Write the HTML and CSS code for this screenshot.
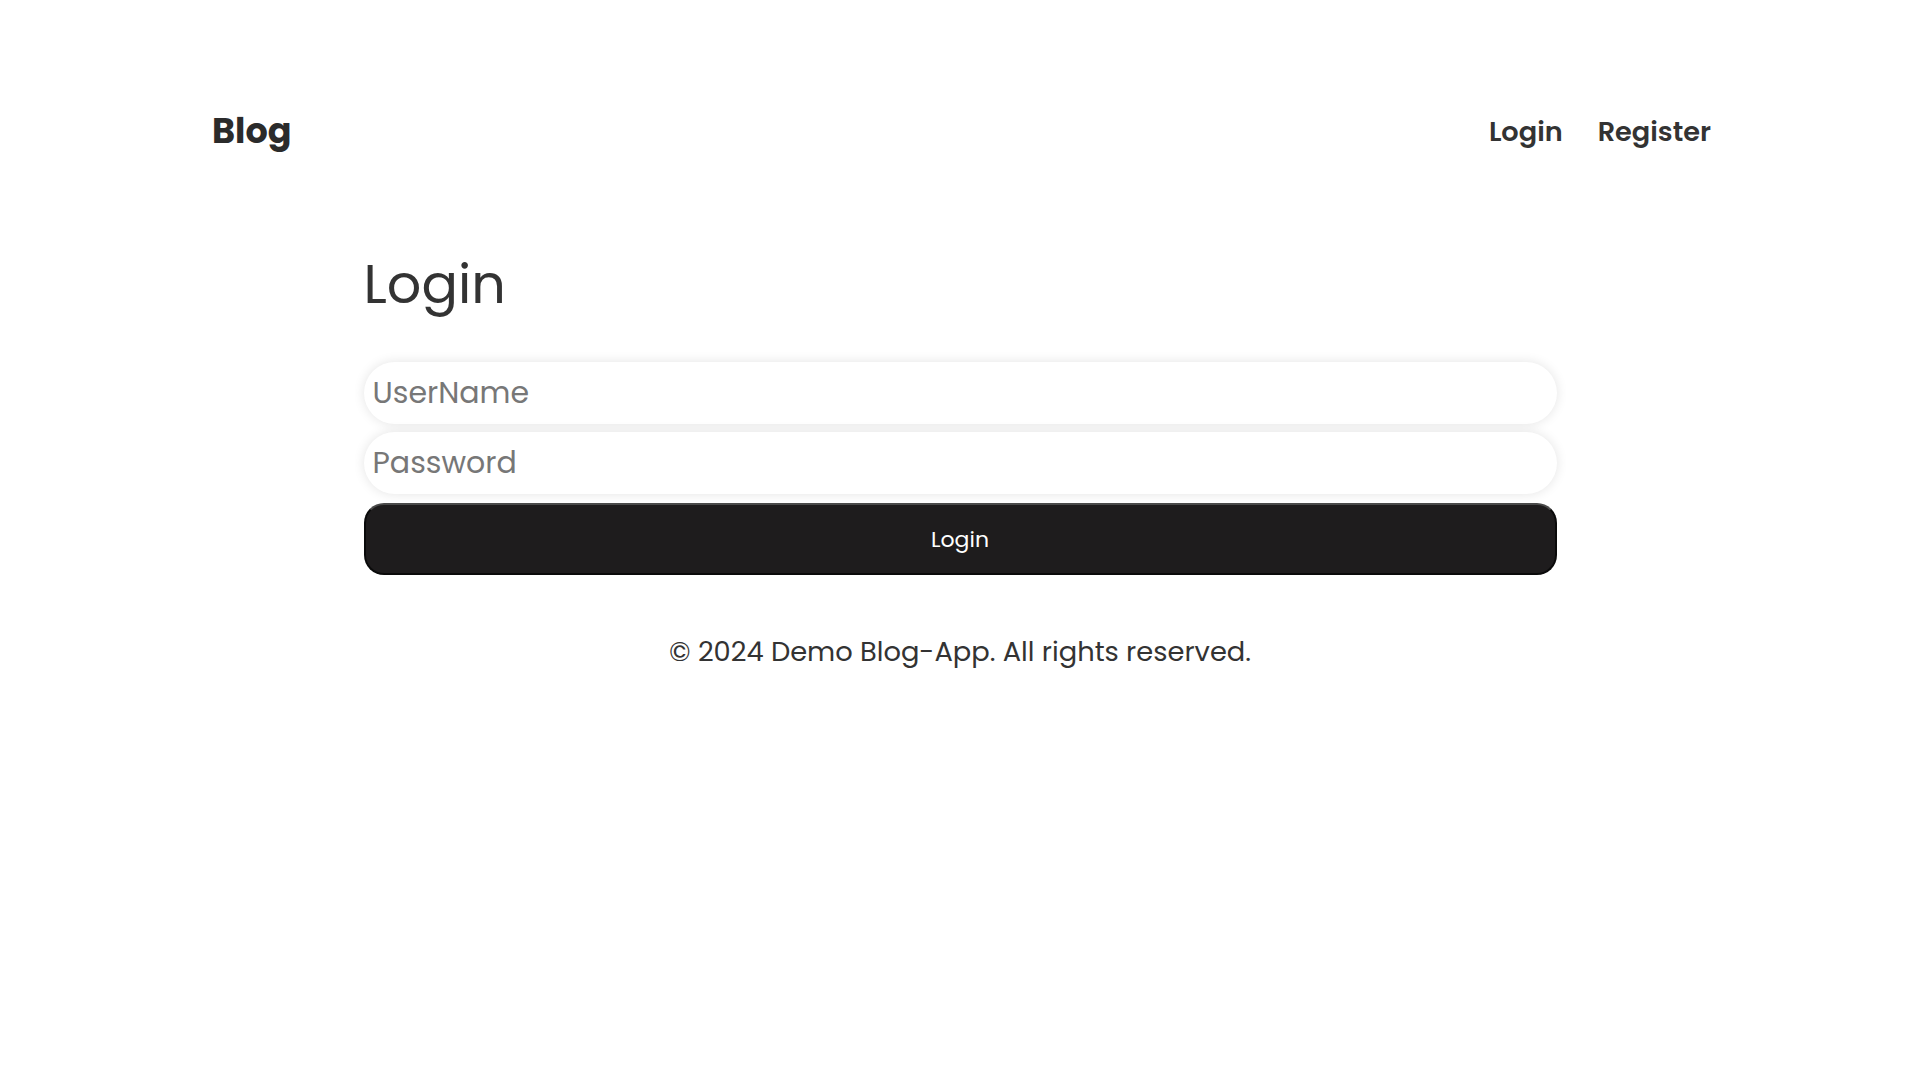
FILE: index.html
```html
<!DOCTYPE html>
<html lang="en">
<head>
    <meta charset="UTF-8">
    <meta name="viewport" content="width=device-width, initial-scale=1.0">
    <title>Blog - Login</title>
    <link rel="stylesheet" href="styles.css">
</head>
<body>
    <header class="header">
        <a href="#" class="logo">Blog</a>
        <nav class="nav">
            <a href="#">Login</a>
            <a href="#">Register</a>
        </nav>
    </header>
    <main class="main">
        <form class="login">
            <h1>Login</h1>
            <input type="text" placeholder="UserName">
            <input type="password" placeholder="Password">
            <button type="button">Login</button>
        </form>
        <footer class="footer">
            <p>&copy; 2024 Demo Blog-App. All rights reserved.</p>
        </footer>
    </main>
</body>
</html>
```

FILE: styles.css
```css
body {
    margin: 0;
    font-family: "Poppins", "Inter", sans-serif;
    color: #333;
    background-color: #fff;
}
a {
    text-decoration: none;
    color: inherit;
}
.header {
    display: flex;
    justify-content: space-between;
    align-items: center;
    height: 80px;
    margin-top: 90px;
    padding: 0 209px 0 212px;
}
.logo {
    font-size: 35px;
    font-weight: 700;
    color: #2b2b2b;
}
.nav {
    display: flex;
    gap: 35px;
    padding-top: 3px;
}
.nav a {
    font-size: 27.2px;
    font-weight: 600;
    color: #333;
}
.main {
    width: 1193px;
    margin: 0 auto;
}
.login {
    display: flex;
    flex-direction: column;
    gap: 8px;
}
.login h1 {
    font-size: 54px;
    font-weight: 400;
    margin: 74px 0 29px;
    color: #333;
}
.login input {
    height: 62px;
    padding: 0 9px;
    border: none;
    border-radius: 31px;
    box-shadow: 0 0 12px rgba(0, 0, 0, 0.11);
    font-family: inherit;
    font-size: 30px;
    color: #333;
    outline: none;
}
.login input::placeholder {
    color: #777;
}
.login button {
    height: 72px;
    margin-top: 1px;
    border: 2px solid #0a0a0a;
    border-top-color: #4a4a4a;
    border-radius: 20px;
    background-color: #1e1c1d;
    color: #fff;
    font-family: inherit;
    font-size: 22px;
    font-weight: 400;
    cursor: pointer;
}
.footer {
    text-align: center;
    margin-top: 56px;
}
.footer p {
    margin: 0;
    font-size: 27.3px;
    color: #333;
}
```
